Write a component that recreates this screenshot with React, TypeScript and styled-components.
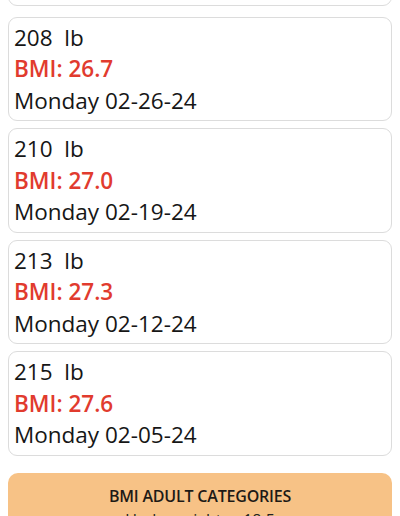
import React from "react";
import styled, { createGlobalStyle } from "styled-components";

const Global = createGlobalStyle`
  html, body { margin: 0; padding: 0; background: #ffffff; overflow: hidden; }
  body { font-family: "Open Sans", "Noto Sans", sans-serif; color: #1c1c1c; }
`;

const Page = styled.div`
  display: flex;
  flex-direction: column;
  padding: 0 8px;
  margin-top: -99px;
`;

const List = styled.div`
  display: flex;
  flex-direction: column;
  gap: 7px;
`;

const Card = styled.div<{ $extra?: number }>`
  border: 1px solid #dcdcdc;
  border-radius: 9px;
  background: #ffffff;
  padding: 4px 5px;
  margin-bottom: ${(p) => p.$extra ?? 0}px;
  display: flex;
  flex-direction: column;
`;

const Line = styled.div<{ $bmi?: boolean }>`
  font-size: 22.5px;
  line-height: 31.5px;
  white-space: pre;
  color: ${(p) => (p.$bmi ? "#e13b2e" : "#161616")};
  font-weight: ${(p) => (p.$bmi ? 600 : 400)};
`;

const Categories = styled.div`
  margin-top: 17px;
  background: #f7c286;
  border-radius: 10px;
  padding: 11px 12px;
  display: flex;
  flex-direction: column;
  align-items: center;
`;

const CatTitle = styled.div`
  font-size: 16px;
  line-height: 24px;
  font-weight: 600;
  color: #1e1a16;
  letter-spacing: -0.2px;
`;

const CatLine = styled.div`
  font-size: 16px;
  line-height: 24px;
  color: #222;
`;

const entries = [
  { w: 206, bmi: "26.4", date: "Monday 03-04-24" },
  { w: 208, bmi: "26.7", date: "Monday 02-26-24" },
  { w: 210, bmi: "27.0", date: "Monday 02-19-24" },
  { w: 213, bmi: "27.3", date: "Monday 02-12-24" },
  { w: 215, bmi: "27.6", date: "Monday 02-05-24" },
];

export default function App() {
  return (
    <>
      <Global />
      <Page>
        <List>
          {entries.map((e, i) => (
            <Card key={e.date} $extra={i === 0 ? 4 : 0}>
              <Line>{`${e.w}  lb`}</Line>
              <Line $bmi>{`BMI: ${e.bmi}`}</Line>
              <Line>{e.date}</Line>
            </Card>
          ))}
        </List>
        <Categories>
          <CatTitle>BMI ADULT CATEGORIES</CatTitle>
          <CatLine>Underweight: &lt; 18.5</CatLine>
          <CatLine>Normal: 18.5 – 24.9</CatLine>
          <CatLine>Overweight: 25 – 29.9</CatLine>
          <CatLine>Obese: 30 or more</CatLine>
        </Categories>
      </Page>
    </>
  );
}
